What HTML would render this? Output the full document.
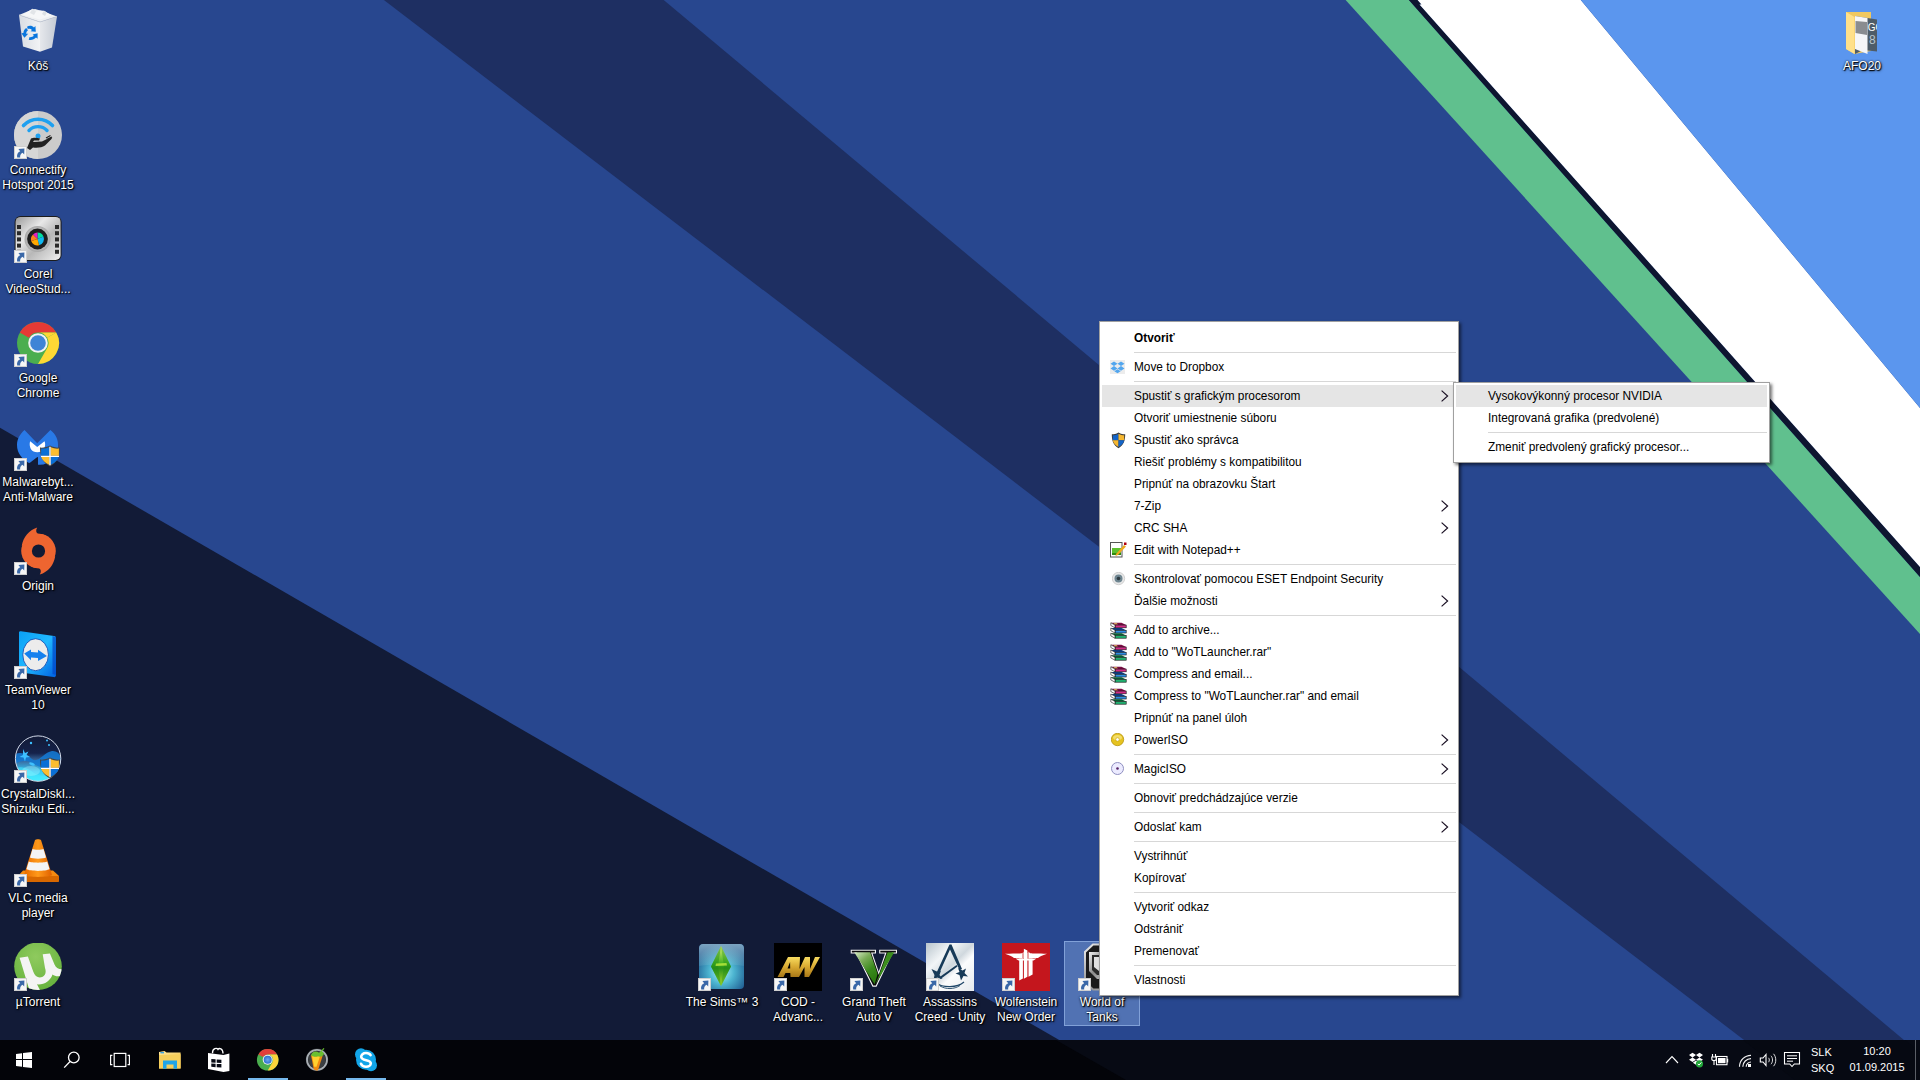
<!DOCTYPE html>
<html><head><meta charset="utf-8">
<style>
html,body{margin:0;padding:0;width:1920px;height:1080px;overflow:hidden;background:#28478f;}
body{position:relative;font-family:"Liberation Sans",sans-serif;}
#bg{position:absolute;left:0;top:0;}
.ic{position:absolute;width:76px;text-align:center;color:#fff;font-size:12px;line-height:15px;text-shadow:1px 1px 1px #000,0 0 2px rgba(0,0,0,.85),1px 1px 3px rgba(0,0,0,.6);}
.ic .lb{position:absolute;left:0;width:76px;top:54px;}
.ic svg{position:absolute;}
.ic{height:85px;}
.ic.sel{background:rgba(150,185,240,.38);box-shadow:inset 0 0 0 1px rgba(170,200,245,.55);}
.sc{position:absolute;width:12px;height:12px;background:#f4f4f4;border:1px solid #c8c8c8;box-sizing:border-box;}
#menu{position:absolute;left:1099px;top:321px;width:360px;height:675px;box-sizing:border-box;background:#fff;border:1px solid #a0a0a0;box-shadow:2px 2px 3px rgba(0,0,0,.55);}
.mi{position:absolute;left:0;width:358px;height:22px;font-size:11.85px;line-height:22px;color:#000;}
.mi span.t{position:absolute;left:34px;top:0;white-space:nowrap;}
.mi.hl{left:2px;width:351px;background:#e5e5e5;}
.mi.hl span.t{left:32px;}
.mi.hl .ar{left:339px;}
.sep{position:absolute;left:34px;width:322px;height:1px;background:#d7d7d7;}
.ar{position:absolute;left:341px;top:5px;}
.mic{position:absolute;left:10px;}
#sub{position:absolute;left:1453px;top:382px;width:317px;height:81px;box-sizing:border-box;background:#fff;border:1px solid #a0a0a0;box-shadow:2px 2px 3px rgba(0,0,0,.55);}
#tb{position:absolute;left:0;top:1040px;width:1920px;height:40px;}
.tray{position:absolute;color:#fff;font-size:11px;line-height:15px;white-space:nowrap;}
</style></head><body>
<svg id="bg" width="1920" height="1080" viewBox="0 0 1920 1080">
  <rect x="0" y="0" width="1920" height="1080" fill="#28478f"/>
  <polygon points="383.9,0 663.7,0 1951.7,1080 1796.4,1080" fill="#1e2f62"/>
  <polygon points="0,427.8 1128.4,1080 0,1080" fill="#121b37"/>
  <polygon points="1345.6,0 1408.9,0 1920,577 1920,634" fill="#60c08e"/>
  <polygon points="1408.9,0 1417.6,0 1421.5,4.5 1419.5,4.5 1920,567 1920,577" fill="#0e1630"/>
  <polygon points="1417.6,0 1580.8,0 1920,408 1920,567 1419.5,4.5 1421.5,4.5" fill="#ffffff"/>
  <polygon points="1580.8,0 1920,0 1920,408" fill="#5b96ee"/>
</svg>

<!--DESK-->
<div class="ic" style="left:0;top:5px"><svg width="48" height="48" viewBox="0 0 48 48" style="position:absolute;left:14px;top:2px">
<defs><linearGradient id="rbL" x1="0" y1="0" x2="1" y2="0"><stop offset="0" stop-color="#d9dde3"/><stop offset="1" stop-color="#f2f3f5"/></linearGradient>
<linearGradient id="rbR" x1="0" y1="0" x2="1" y2="0"><stop offset="0" stop-color="#e6e8ec"/><stop offset="1" stop-color="#c4cad4"/></linearGradient></defs>
<path d="M5 8 L17 3 L21 2 L28 4 L43 9.6 L26 15 Z" fill="#eef0f2"/>
<path d="M9 8 L14 4.5 L18.5 1.8 L22 4.5 L26 3.6 L30 3.8 L33 5.5 L38 8.5 L26 12.5Z" fill="#f6f7f8"/><path d="M18.5 1.8 L22 4.5 L20 8 L16 6Z" fill="#e2e5e8"/><path d="M30 3.8 L33 5.5 L31 9 L28 7Z" fill="#dde1e5"/>
<path d="M5 8 L26 15 L26 44.8 L9 39.4 Z" fill="url(#rbL)"/>
<path d="M26 15 L43 9.6 L38 40.4 L26 44.8 Z" fill="url(#rbR)"/>
<path d="M5 8 L26 15 L43 9.6" fill="none" stroke="#c7ccd4" stroke-width="0.8"/>
<g fill="#0a76de" transform="translate(16.2,25.9)">
<path d="M-3.2 -6.2 C-1 -7.6 2 -7.4 3.8 -5.4 L5.2 -6.8 L5.6 -1.2 L0.4 -1.6 L1.8 -3 C0.6 -4.4 -1.2 -4.6 -2.4 -3.8Z"/>
<path d="M-6.8 0.2 C-6.8 -2 -5.8 -3.8 -4 -5 L-2.2 -2.6 C-3.4 -1.8 -4 -0.6 -4 0.8 L-2 0.8 L-5.8 4.8 L-8.8 0.4Z"/>
<path d="M-1.5 6.8 C1 7.5 4 6.8 5.8 4.6 L7.4 5.8 L7.4 0.4 L2.4 1.6 L3.6 2.8 C2.4 4 0.8 4.4 -0.6 4.2Z"/>
</g>
</svg><div class="lb">Kôš</div></div>
<div class="ic" style="left:0;top:109px"><svg width="48" height="48" viewBox="0 0 48 48" style="position:absolute;left:14px;top:2px">
<circle cx="24" cy="24" r="24" fill="#cbcbcb"/><path d="M24 0 A24 24 0 0 0 24 48Z" fill="#d6d6d6"/>
<g fill="none" stroke="#1ea0f0" stroke-linecap="round"><path d="M9.5 14.5 A20 20 0 0 1 38.5 14.5" stroke-width="3.6"/><path d="M15 19.5 A12.5 12.5 0 0 1 33 19.5" stroke-width="3.4"/></g>
<circle cx="24" cy="25" r="2.5" fill="#1ea0f0"/>
<path d="M13 37 L17 27.5 C19 26.6 23 26.6 26 27.5 L25 29.6 L20 29.6 L19 31 L28 30.5 L36 26.5 C37.5 26 38.5 27 37.5 28 L31 34.5 C28 36.5 24 37 19 36.5 L16 39Z" fill="#222"/>
<path d="M32 27 L36.5 24.5 M33 28.5 L38 26" stroke="#222" stroke-width="1.2"/>
</svg><svg class="sco" width="13" height="13" viewBox="0 0 13 13" style="position:absolute;left:14px;top:37px"><rect x="0" y="0" width="13" height="13" fill="#cfcfcf"/><rect x="1" y="1" width="11" height="11" fill="#f6f6f6"/><path d="M3.2 11.6 C2.6 8.6 3.6 6.4 6.2 5.2 L4.4 3 L10.4 2.6 L10.2 8.6 L8.6 6.8 C6.8 7.8 5.8 9.4 6.2 11.6Z" fill="#3a68a8"/></svg><div class="lb">Connectify<br>Hotspot 2015</div></div>
<div class="ic" style="left:0;top:213px"><svg width="48" height="48" viewBox="0 0 48 48" style="position:absolute;left:14px;top:2px">
<defs><linearGradient id="crG" x1="0" y1="0" x2="1" y2="1"><stop offset="0" stop-color="#9a9a9a"/><stop offset=".35" stop-color="#e8e8e8"/><stop offset=".6" stop-color="#b8b8b8"/><stop offset="1" stop-color="#f0f0f0"/></linearGradient>
<radialGradient id="crL" cx=".5" cy=".5" r=".5"><stop offset="0" stop-color="#fff"/><stop offset="1" stop-color="#a8a8a8"/></radialGradient></defs>
<rect x="0.6" y="0.9" width="47" height="45" rx="6" fill="#1c1c1c"/>
<rect x="1.6" y="1.9" width="45" height="43" rx="5" fill="url(#crG)"/>
<g fill="#2a2a2a"><rect x="3" y="10" width="4" height="4"/><rect x="3" y="16.2" width="4" height="4"/><rect x="3" y="22.4" width="4" height="4"/><rect x="3" y="28.6" width="4" height="4"/><rect x="3" y="34.8" width="4" height="4"/>
<rect x="41" y="10" width="4" height="4"/><rect x="41" y="16.2" width="4" height="4"/><rect x="41" y="22.4" width="4" height="4"/><rect x="41" y="28.6" width="4" height="4"/><rect x="41" y="34.8" width="4" height="4"/></g>
<circle cx="23.5" cy="24" r="13" fill="url(#crL)"/><circle cx="23.5" cy="24" r="10.4" fill="#1e1e1e"/>
<path d="M23.5 24 L23.5 17.5 A6.5 6.5 0 0 1 29.5 21.5Z" fill="#00e0a0"/><path d="M23.5 24 L29.5 21.5 A6.5 6.5 0 0 1 25 30.3Z" fill="#10b8f0"/>
<path d="M23.5 24 L25 30.3 A6.5 6.5 0 0 1 17.2 26Z" fill="#ffa800"/><path d="M23.5 24 L17.2 26 A6.5 6.5 0 0 1 19 19.5Z" fill="#ff8020"/><path d="M23.5 24 L19 19.5 A6.5 6.5 0 0 1 23.5 17.5Z" fill="#e020c0"/>
</svg><svg class="sco" width="13" height="13" viewBox="0 0 13 13" style="position:absolute;left:14px;top:37px"><rect x="0" y="0" width="13" height="13" fill="#cfcfcf"/><rect x="1" y="1" width="11" height="11" fill="#f6f6f6"/><path d="M3.2 11.6 C2.6 8.6 3.6 6.4 6.2 5.2 L4.4 3 L10.4 2.6 L10.2 8.6 L8.6 6.8 C6.8 7.8 5.8 9.4 6.2 11.6Z" fill="#3a68a8"/></svg><div class="lb">Corel<br>VideoStud...</div></div>
<div class="ic" style="left:0;top:317px"><svg width="48" height="48" viewBox="0 0 48 48" style="position:absolute;left:14px;top:2px">
<circle cx="24" cy="24" r="21" fill="#4bae4f"/>
<path d="M24 3 A21 21 0 0 1 42.2 13.5 L24 13.5 A10.5 10.5 0 0 0 14.9 18.75 L5.8 13.5 A21 21 0 0 1 24 3Z" fill="#e53a35"/>
<path d="M42.2 13.5 A21 21 0 0 1 24 45 L33.1 29.25 A10.5 10.5 0 0 0 33.1 18.75 Z" fill="#fdd835"/>
<path d="M42.2 13.5 L24 13.5 A10.5 10.5 0 0 1 33.1 18.75Z" fill="#fdd835"/>
<circle cx="24" cy="24" r="9.8" fill="#f2f2f2"/><circle cx="24" cy="24" r="7.8" fill="#3f84d6"/>
</svg><svg class="sco" width="13" height="13" viewBox="0 0 13 13" style="position:absolute;left:14px;top:37px"><rect x="0" y="0" width="13" height="13" fill="#cfcfcf"/><rect x="1" y="1" width="11" height="11" fill="#f6f6f6"/><path d="M3.2 11.6 C2.6 8.6 3.6 6.4 6.2 5.2 L4.4 3 L10.4 2.6 L10.2 8.6 L8.6 6.8 C6.8 7.8 5.8 9.4 6.2 11.6Z" fill="#3a68a8"/></svg><div class="lb">Google<br>Chrome</div></div>
<div class="ic" style="left:0;top:421px"><svg width="48" height="48" viewBox="0 0 48 48" style="position:absolute;left:14px;top:2px">
<path d="M10.5 7 L23.2 20.3 L36.4 7 C42 11.5 44.6 17 44 24 C43 33 35.5 41.8 26 41.8 L24 41.8 L24 34 C22 34 17 40 15 40 C8 36 3 30 3 22 C3 16 6 11 10.5 7Z" fill="#2979e6"/>
<path d="M16.2 18.2 L23.2 24 L30.5 18.2 C32 21.5 31 26.5 27 28.5 C25 29.4 21.6 29.4 19.6 28.5 C16 27 15 21.5 16.2 18.2Z" fill="#fff"/>
</svg><svg width="22" height="22" viewBox="0 0 22 22" style="position:absolute;left:39px;top:24px"><path d="M11 0.6 C8 2.3 4.6 2.8 1 2.6 C1 11 3.5 17.8 11 21.4 C18.5 17.8 21 11 21 2.6 C17.4 2.8 14 2.3 11 0.6Z" fill="#444"/><path d="M11 1.8 C8.3 3.3 5.2 3.7 2.1 3.6 L2.1 10.8 L10.2 10.8 L10.2 2.3Z" fill="#0a6fd6"/><path d="M11.8 2.3 C14.3 3.5 17 3.8 19.9 3.6 L19.9 10.8 L11.8 10.8Z" fill="#fbbd30"/><path d="M2.2 12 L10.2 12 L10.2 19.8 C5.5 17.2 3 15 2.2 12Z" fill="#fbbd30"/><path d="M11.8 12 L19.8 12 C19 15 16.5 17.2 11.8 19.8Z" fill="#0a6fd6"/><path d="M11 1.8 L11 20.2 M2 11.4 L20 11.4" stroke="#fff" stroke-width="1.4"/></svg><svg class="sco" width="13" height="13" viewBox="0 0 13 13" style="position:absolute;left:14px;top:37px"><rect x="0" y="0" width="13" height="13" fill="#cfcfcf"/><rect x="1" y="1" width="11" height="11" fill="#f6f6f6"/><path d="M3.2 11.6 C2.6 8.6 3.6 6.4 6.2 5.2 L4.4 3 L10.4 2.6 L10.2 8.6 L8.6 6.8 C6.8 7.8 5.8 9.4 6.2 11.6Z" fill="#3a68a8"/></svg><div class="lb">Malwarebyt...<br>Anti-Malware</div></div>
<div class="ic" style="left:0;top:525px"><svg width="48" height="48" viewBox="0 0 48 48" style="position:absolute;left:14px;top:2px">
<circle cx="24.5" cy="24" r="17.3" fill="#ee6530"/>
<path d="M7.8 19 C9 10 15 3 23.2 0.4 C21.5 3.5 22 5.5 24 6.7 C28 6.8 31 8 33.5 9.5 Z" fill="#ee6530"/>
<path d="M41.2 29 C40 38 34 45 25.8 47.6 C27.5 44.5 27 42.5 25 41.3 C21 41.2 18 40 15.5 38.5 Z" fill="#ee6530"/>
<circle cx="24.5" cy="24" r="6.6" fill="#121a34"/>
</svg><svg class="sco" width="13" height="13" viewBox="0 0 13 13" style="position:absolute;left:14px;top:37px"><rect x="0" y="0" width="13" height="13" fill="#cfcfcf"/><rect x="1" y="1" width="11" height="11" fill="#f6f6f6"/><path d="M3.2 11.6 C2.6 8.6 3.6 6.4 6.2 5.2 L4.4 3 L10.4 2.6 L10.2 8.6 L8.6 6.8 C6.8 7.8 5.8 9.4 6.2 11.6Z" fill="#3a68a8"/></svg><div class="lb">Origin</div></div>
<div class="ic" style="left:0;top:629px"><svg width="48" height="48" viewBox="0 0 48 48" style="position:absolute;left:14px;top:2px">
<defs><linearGradient id="tvG" x1="0" y1="0" x2="1" y2="1"><stop offset="0" stop-color="#0aa0f5"/><stop offset=".5" stop-color="#20b8ff"/><stop offset="1" stop-color="#0060e0"/></linearGradient></defs>
<path d="M5 1.5 C5 0.5 6 0 7 0.2 L40 5 C41.5 5.2 42 6 42 7 L42 44 C42 45.5 41 46.5 39.5 46 L7 41.5 C5.5 41.3 5 40.5 5 39.5Z" fill="url(#tvG)"/>
<path d="M38.5 5 L42 6 L42 44 L38.5 43Z" fill="#0046c8" opacity=".7"/>
<ellipse cx="21.6" cy="23.7" rx="12.8" ry="16" fill="#ececec" stroke="#0040b0" stroke-width="0.8"/>
<path d="M10.2 22.5 L17 18.4 L17 21 L24 21.5 L24 18.8 L33 25 L24 30 L24 27 L17 26.5 L17 29.2Z" fill="#1580ee"/>
</svg><svg class="sco" width="13" height="13" viewBox="0 0 13 13" style="position:absolute;left:14px;top:37px"><rect x="0" y="0" width="13" height="13" fill="#cfcfcf"/><rect x="1" y="1" width="11" height="11" fill="#f6f6f6"/><path d="M3.2 11.6 C2.6 8.6 3.6 6.4 6.2 5.2 L4.4 3 L10.4 2.6 L10.2 8.6 L8.6 6.8 C6.8 7.8 5.8 9.4 6.2 11.6Z" fill="#3a68a8"/></svg><div class="lb">TeamViewer<br>10</div></div>
<div class="ic" style="left:0;top:733px"><svg width="48" height="48" viewBox="0 0 48 48" style="position:absolute;left:14px;top:2px">
<defs><linearGradient id="cdG" x1="0" y1="0" x2="0" y2="1"><stop offset="0" stop-color="#121a36"/><stop offset=".38" stop-color="#15224a"/><stop offset=".55" stop-color="#3a6aa0"/><stop offset=".78" stop-color="#38c8f4"/><stop offset="1" stop-color="#50f4ff"/></linearGradient>
<clipPath id="cdC"><circle cx="24.1" cy="23.6" r="22.7"/></clipPath></defs>
<circle cx="24.1" cy="23.6" r="22.7" fill="url(#cdG)"/>
<g clip-path="url(#cdC)">
<path d="M0 20 C6 16 12 18 18 24 C24 29 30 17 38 16 C43 15.5 46 19 48 24 L48 30 C44 25 40 26 36 30 C32 34 26 33 20 29 C14 25 6 25 0 30Z" fill="#1478d0" opacity=".9"/>
<path d="M0 34 C8 30 14 33 20 38 C26 42 34 42 48 36 L48 48 L0 48Z" fill="#40e8ff" opacity=".6"/><ellipse cx="17" cy="36" rx="9" ry="5" fill="#b8f8ff" opacity=".35"/>
<g fill="#3ec0ff"><path d="M9 14 L11 18 L14.5 16.5 L12.5 20 L16 22 L12 22.5 L11 26.5 L9.5 22.5 L5.5 22 L9 20Z"/><ellipse cx="18" cy="29" rx="3" ry="1.3" transform="rotate(25 18 29)"/><circle cx="17" cy="8" r="1.2"/><circle cx="33" cy="5.5" r="1"/><circle cx="35" cy="10" r="1"/></g>
</g>
<circle cx="24.1" cy="23.6" r="22.7" fill="none" stroke="#d0d8e8" stroke-width="1"/>
</svg><svg width="22" height="22" viewBox="0 0 22 22" style="position:absolute;left:39px;top:24px"><path d="M11 0.6 C8 2.3 4.6 2.8 1 2.6 C1 11 3.5 17.8 11 21.4 C18.5 17.8 21 11 21 2.6 C17.4 2.8 14 2.3 11 0.6Z" fill="#444"/><path d="M11 1.8 C8.3 3.3 5.2 3.7 2.1 3.6 L2.1 10.8 L10.2 10.8 L10.2 2.3Z" fill="#0a6fd6"/><path d="M11.8 2.3 C14.3 3.5 17 3.8 19.9 3.6 L19.9 10.8 L11.8 10.8Z" fill="#fbbd30"/><path d="M2.2 12 L10.2 12 L10.2 19.8 C5.5 17.2 3 15 2.2 12Z" fill="#fbbd30"/><path d="M11.8 12 L19.8 12 C19 15 16.5 17.2 11.8 19.8Z" fill="#0a6fd6"/><path d="M11 1.8 L11 20.2 M2 11.4 L20 11.4" stroke="#fff" stroke-width="1.4"/></svg><svg class="sco" width="13" height="13" viewBox="0 0 13 13" style="position:absolute;left:14px;top:37px"><rect x="0" y="0" width="13" height="13" fill="#cfcfcf"/><rect x="1" y="1" width="11" height="11" fill="#f6f6f6"/><path d="M3.2 11.6 C2.6 8.6 3.6 6.4 6.2 5.2 L4.4 3 L10.4 2.6 L10.2 8.6 L8.6 6.8 C6.8 7.8 5.8 9.4 6.2 11.6Z" fill="#3a68a8"/></svg><div class="lb">CrystalDiskI...<br>Shizuku Edi...</div></div>
<div class="ic" style="left:0;top:837px"><svg width="48" height="48" viewBox="0 0 48 48" style="position:absolute;left:14px;top:2px">
<defs><linearGradient id="vlG" x1="0" y1="0" x2="1" y2="0"><stop offset="0" stop-color="#e86a00"/><stop offset=".5" stop-color="#ff9a1a"/><stop offset="1" stop-color="#e06000"/></linearGradient></defs>
<path d="M4 37 L9 31.5 L39 31.5 L45 37 L45 41.5 C45 42.5 44 43 43 43 L6 43 C5 43 4 42.5 4 41.5Z" fill="#f58a10"/>
<path d="M4 37 L45 37 L45 41.5 C45 42.5 44 43 43 43 L6 43 C5 43 4 42.5 4 41.5Z" fill="#d86800"/>
<path d="M21 1 C22 0 26 0 27 1 L38 36 C36 38.5 12 38.5 10 36Z" fill="url(#vlG)"/>
<path d="M18.5 10 C20 11 28 11 29.5 10 L32 18.5 C29.5 20 18.5 20 16 18.5Z" fill="#f4f4f4"/>
<path d="M14.8 22.5 C17 24 31 24 33.2 22.5 L35.5 30 C32 32.5 16 32.5 12.5 30Z" fill="#f4f4f4"/>
</svg><svg class="sco" width="13" height="13" viewBox="0 0 13 13" style="position:absolute;left:14px;top:37px"><rect x="0" y="0" width="13" height="13" fill="#cfcfcf"/><rect x="1" y="1" width="11" height="11" fill="#f6f6f6"/><path d="M3.2 11.6 C2.6 8.6 3.6 6.4 6.2 5.2 L4.4 3 L10.4 2.6 L10.2 8.6 L8.6 6.8 C6.8 7.8 5.8 9.4 6.2 11.6Z" fill="#3a68a8"/></svg><div class="lb">VLC media<br>player</div></div>
<div class="ic" style="left:0;top:941px"><svg width="48" height="48" viewBox="0 0 48 48" style="position:absolute;left:14px;top:2px">
<defs><radialGradient id="utG" cx=".45" cy=".3" r=".8"><stop offset="0" stop-color="#8fca5e"/><stop offset="1" stop-color="#62b03a"/></radialGradient>
<clipPath id="utC"><circle cx="24" cy="23.3" r="23.8"/></clipPath></defs>
<circle cx="24" cy="23.3" r="23.8" fill="url(#utG)"/>
<g clip-path="url(#utC)"><path d="M5.6 14.8 L13.9 13.6 L19.2 28.5 C20.8 33.5 24.5 35.5 28.2 34 C31.6 32.6 32.4 29 31 25 L28.7 11.2 L35.9 10.4 L40.5 21.5 C41.8 24.8 44.5 26.4 48.5 26.2 L48.5 32.5 C44.5 33.8 41 33.5 38.5 31.5 C36.5 37.5 31 41.5 24.5 41.5 L23 41.3 L27 49 L16 49Z" fill="#f4f4f4"/></g>
</svg><svg class="sco" width="13" height="13" viewBox="0 0 13 13" style="position:absolute;left:14px;top:37px"><rect x="0" y="0" width="13" height="13" fill="#cfcfcf"/><rect x="1" y="1" width="11" height="11" fill="#f6f6f6"/><path d="M3.2 11.6 C2.6 8.6 3.6 6.4 6.2 5.2 L4.4 3 L10.4 2.6 L10.2 8.6 L8.6 6.8 C6.8 7.8 5.8 9.4 6.2 11.6Z" fill="#3a68a8"/></svg><div class="lb">µTorrent</div></div>
<div class="ic" style="left:684px;top:941px"><svg width="48" height="48" viewBox="0 0 48 48" style="position:absolute;left:14px;top:2px">
<defs><radialGradient id="smG" cx=".5" cy=".62" r=".62"><stop offset="0" stop-color="#a8f4fa"/><stop offset=".45" stop-color="#4cb4d0"/><stop offset="1" stop-color="#1e5a90"/></radialGradient>
<linearGradient id="smT" x1="0" y1="0" x2="0" y2="1"><stop offset="0" stop-color="#c8e0e8" stop-opacity=".55"/><stop offset="1" stop-color="#c8e0e8" stop-opacity=".1"/></linearGradient>
<linearGradient id="smP" x1="0" y1="0" x2="0" y2="1"><stop offset="0" stop-color="#d8f070"/><stop offset=".45" stop-color="#40b020"/><stop offset=".55" stop-color="#2a9018"/><stop offset="1" stop-color="#b0e030"/></linearGradient></defs>
<rect x="1" y="1" width="45" height="45" rx="4" fill="url(#smG)"/>
<path d="M1 23 C14 20.5 33 20.5 46 23 L46 5 C46 2.8 44.2 1 42 1 L5 1 C2.8 1 1 2.8 1 5Z" fill="url(#smT)"/>
<path d="M23 3 L33 23.5 L23 43 L13 23.5Z" fill="url(#smP)"/>
<path d="M23 3 L13 23.5 L23 43 L20 23.5Z" fill="#1e8a18" opacity=".45"/>
<path d="M23 3 L33 23.5 L23 43 L26 23.5Z" fill="#1e8a18" opacity=".35"/>
<path d="M18 20.5 L28.5 20 L29 22.5 L17.5 23Z" fill="#c8f040" opacity=".75"/>
</svg><svg class="sco" width="13" height="13" viewBox="0 0 13 13" style="position:absolute;left:14px;top:37px"><rect x="0" y="0" width="13" height="13" fill="#cfcfcf"/><rect x="1" y="1" width="11" height="11" fill="#f6f6f6"/><path d="M3.2 11.6 C2.6 8.6 3.6 6.4 6.2 5.2 L4.4 3 L10.4 2.6 L10.2 8.6 L8.6 6.8 C6.8 7.8 5.8 9.4 6.2 11.6Z" fill="#3a68a8"/></svg><div class="lb">The Sims™ 3</div></div>
<div class="ic" style="left:760px;top:941px"><svg width="48" height="48" viewBox="0 0 48 48" style="position:absolute;left:14px;top:2px">
<defs><linearGradient id="cdAW" x1="0" y1="0" x2="0" y2="1"><stop offset="0" stop-color="#f8dc60"/><stop offset=".5" stop-color="#d8a830"/><stop offset="1" stop-color="#a87818"/></linearGradient></defs>
<rect x="0" y="0" width="48" height="48" fill="#000"/>
<path d="M3.5 34 L14 14 L22 14 L22.5 34 L16.5 34 L16.3 30 L11.5 30 L9.5 34Z M13.5 25.5 L16.2 25.5 L16.1 19Z" fill="url(#cdAW)"/>
<path d="M20 14 L26 14 L25.5 26 L31 14 L36 14 L36 26 L41 14 L46 14 L35 34 L30.5 34 L30.5 24 L25 34 L20.5 34Z" fill="url(#cdAW)"/>
</svg><svg class="sco" width="13" height="13" viewBox="0 0 13 13" style="position:absolute;left:14px;top:37px"><rect x="0" y="0" width="13" height="13" fill="#cfcfcf"/><rect x="1" y="1" width="11" height="11" fill="#f6f6f6"/><path d="M3.2 11.6 C2.6 8.6 3.6 6.4 6.2 5.2 L4.4 3 L10.4 2.6 L10.2 8.6 L8.6 6.8 C6.8 7.8 5.8 9.4 6.2 11.6Z" fill="#3a68a8"/></svg><div class="lb">COD -<br>Advanc...</div></div>
<div class="ic" style="left:836px;top:941px"><svg width="48" height="48" viewBox="0 0 48 48" style="position:absolute;left:14px;top:2px">
<defs><linearGradient id="gtG" x1="0" y1="0" x2=".6" y2="1"><stop offset="0" stop-color="#d8ecc8"/><stop offset=".35" stop-color="#7aac58"/><stop offset=".7" stop-color="#3a8a1c"/><stop offset="1" stop-color="#2c7a10"/></linearGradient></defs>
<path d="M0.7 6.7 L26 6.7 L26 10.5 L22.5 10.5 L28.7 28.7 L35 10.5 L29.2 10.5 L29.2 6.7 L47 6.7 L47 10.5 L42.5 10.5 L26.5 43.7 L22.5 43.7 L6 10.5 L0.7 10.5Z" fill="#f4f4f4"/>
<path d="M1.8 7.8 L24.9 7.8 L24.9 9.4 L21 9.4 L28.7 31.8 L36.6 9.4 L30.3 9.4 L30.3 7.8 L45.9 7.8 L45.9 9.4 L41.8 9.4 L25.8 42.6 L23.2 42.6 L6.7 9.4 L1.8 9.4Z" fill="#0a0a0a"/>
<path d="M4.2 9.2 L20.2 9.2 L27.6 31 L24.6 41.2 Z" fill="url(#gtG)"/>
<path d="M37.6 9.2 L44.2 9.2 L25.6 41 L28.9 32.6 Z" fill="#3c8e1e"/>
</svg><svg class="sco" width="13" height="13" viewBox="0 0 13 13" style="position:absolute;left:14px;top:37px"><rect x="0" y="0" width="13" height="13" fill="#cfcfcf"/><rect x="1" y="1" width="11" height="11" fill="#f6f6f6"/><path d="M3.2 11.6 C2.6 8.6 3.6 6.4 6.2 5.2 L4.4 3 L10.4 2.6 L10.2 8.6 L8.6 6.8 C6.8 7.8 5.8 9.4 6.2 11.6Z" fill="#3a68a8"/></svg><div class="lb">Grand Theft<br>Auto V</div></div>
<div class="ic" style="left:912px;top:941px"><svg width="48" height="48" viewBox="0 0 48 48" style="position:absolute;left:14px;top:2px">
<defs><linearGradient id="acG" x1="0" y1="0" x2="1" y2="1"><stop offset="0" stop-color="#b8c4cc"/><stop offset=".3" stop-color="#f2f5f7"/><stop offset=".5" stop-color="#d0d8de"/><stop offset=".62" stop-color="#fbfcfd"/><stop offset="1" stop-color="#e6eaee"/></linearGradient></defs>
<rect x="0" y="0" width="48" height="48" fill="url(#acG)"/>
<path d="M23.5 1.5 L25.5 1.5 L36 26 L33.5 27 L24 6.5 L12 33 L9.5 32Z" fill="#173a58"/>
<path d="M5.5 26 L12 29 L15 27.5 L13.5 32 L16.5 36 L11 34.5 L7.5 37.5 L8.5 32Z" fill="#173a58"/>
<path d="M32 25 L36.5 27.5 L40 25.5 L38.5 30 L42 33.5 L37.5 33 L35 37.5 L33.5 32 L29.5 30.5 L33.5 29Z" fill="#173a58"/>
<path d="M13 34.5 L30.5 22 L31.5 23.5 L14.5 36Z" fill="#173a58"/>
<path d="M10 40 C17 45 31 45 38 39" fill="none" stroke="#1e4668" stroke-width="1.2"/>
<path d="M14 43 C20 46.5 28 46.5 34 42.5" fill="none" stroke="#1e4668" stroke-width=".9"/>
</svg><svg class="sco" width="13" height="13" viewBox="0 0 13 13" style="position:absolute;left:14px;top:37px"><rect x="0" y="0" width="13" height="13" fill="#cfcfcf"/><rect x="1" y="1" width="11" height="11" fill="#f6f6f6"/><path d="M3.2 11.6 C2.6 8.6 3.6 6.4 6.2 5.2 L4.4 3 L10.4 2.6 L10.2 8.6 L8.6 6.8 C6.8 7.8 5.8 9.4 6.2 11.6Z" fill="#3a68a8"/></svg><div class="lb">Assassins<br>Creed - Unity</div></div>
<div class="ic" style="left:988px;top:941px"><svg width="48" height="48" viewBox="0 0 48 48" style="position:absolute;left:14px;top:2px">
<rect x="0" y="0" width="48" height="48" fill="#c4161d"/>
<g fill="#fff">
<path d="M3 10.8 C14 10.4 18 10.6 20.5 10.3 L21.5 8.5 L21.5 10.3 L26.5 10.3 L26.5 8.5 L28 10.3 C31 10.6 36 10.4 45 10.8 C40 12.3 37.5 14 36 15 L12 15 C10.5 14 8 12.3 3 10.8Z"/>
<path d="M13.5 15.6 L34.5 15.6 L31.5 17.5 L16.5 17.5Z"/>
<path d="M17.2 15.6 L20.9 15.6 L20.9 35.4 L17.2 37.4Z"/>
<path d="M21.9 5.8 L25.4 7.6 L25.4 33.8 L21.9 35.8Z"/>
<path d="M26.5 15.6 L30.6 15.6 L30.6 31.6 L26.5 33.8Z"/>
</g>
<path d="M21 10.3 L21 15 M26 10.3 L26 15" stroke="#c4161d" stroke-width="0.8"/>
</svg><svg class="sco" width="13" height="13" viewBox="0 0 13 13" style="position:absolute;left:14px;top:37px"><rect x="0" y="0" width="13" height="13" fill="#cfcfcf"/><rect x="1" y="1" width="11" height="11" fill="#f6f6f6"/><path d="M3.2 11.6 C2.6 8.6 3.6 6.4 6.2 5.2 L4.4 3 L10.4 2.6 L10.2 8.6 L8.6 6.8 C6.8 7.8 5.8 9.4 6.2 11.6Z" fill="#3a68a8"/></svg><div class="lb">Wolfenstein<br>New Order</div></div>
<div class="ic sel" style="left:1064px;top:941px"><svg width="48" height="48" viewBox="0 0 48 48" style="position:absolute;left:14px;top:2px">
<defs><linearGradient id="wtG" x1="0" y1="0" x2="1" y2="1"><stop offset="0" stop-color="#f0f0f0"/><stop offset=".5" stop-color="#8a8a8a"/><stop offset="1" stop-color="#d0d0d0"/></linearGradient></defs>
<path d="M15 1.5 L38 1.5 L46 9 L46 39 L38 46.5 L15 46.5 L7 39 L7 9Z" fill="#1a1a1a" stroke="url(#wtG)" stroke-width="2"/>
<path d="M11 9 L30 9 L30 36 L19 36 L11 28Z" fill="url(#wtG)"/>
<path d="M14 12 L26 12 L26 32 L19 32 L14 27Z" fill="#2a2a2a"/>
<path d="M16 14 L21 14 L21 28 L16 24Z" fill="#e0e0e0"/>
</svg><svg class="sco" width="13" height="13" viewBox="0 0 13 13" style="position:absolute;left:14px;top:37px"><rect x="0" y="0" width="13" height="13" fill="#cfcfcf"/><rect x="1" y="1" width="11" height="11" fill="#f6f6f6"/><path d="M3.2 11.6 C2.6 8.6 3.6 6.4 6.2 5.2 L4.4 3 L10.4 2.6 L10.2 8.6 L8.6 6.8 C6.8 7.8 5.8 9.4 6.2 11.6Z" fill="#3a68a8"/></svg><div class="lb">World of<br>Tanks</div></div>
<div class="ic" style="left:1824px;top:5px"><svg width="48" height="48" viewBox="0 0 48 48" style="position:absolute;left:14px;top:2px">
<path d="M8 5 L33 5 L33 44 L16.5 47 L8 42Z" fill="#f0c860"/>
<path d="M17 9 L39 12.5 L39 44.5 L25 43 L17 47Z" fill="#4e5c68"/>
<path d="M17 9 L29.5 11 L29.5 47 L17 42Z" fill="#f6f6f8"/>
<path d="M17.5 14 L29 15 L29 28 L17.5 26Z" fill="#8a8c90"/>
<path d="M8 5 L16.5 10 L16.5 47 L8 42Z" fill="#ffe08a"/>
<clipPath id="afoC"><path d="M29.5 11 L39 12.5 L39 44.5 L29.5 47Z"/></clipPath>
<g clip-path="url(#afoC)" style="text-shadow:none"><text x="29.8" y="23.5" font-family="Liberation Sans" font-size="10" fill="#fff" style="text-shadow:none">GC</text>
<text x="31" y="37" font-family="Liberation Sans" font-size="12" fill="#b8c4cc" style="text-shadow:none">8</text></g>
</svg><div class="lb">AFO20</div></div>
<!--/DESK-->
<!-- taskbar -->
<div id="tb">
<svg width="1920" height="40" viewBox="0 0 1920 40" style="position:absolute;left:0;top:0">
  <defs>
   <radialGradient id="chG" cx=".5" cy=".5" r=".5"><stop offset="0" stop-color="#6fa8f0"/><stop offset="1" stop-color="#2a6fcf"/></radialGradient>
   <linearGradient id="flG" x1="0" y1="0" x2="1" y2="1"><stop offset="0" stop-color="#ffe79a"/><stop offset="1" stop-color="#f2c24a"/></linearGradient>
  </defs>
  <rect width="1920" height="40" fill="#070a14"/>
  <polygon points="0,0 1056,0 1126,40 0,40" fill="#030409"/>
  <polygon points="1743,0 1905,0 1920,12 1920,40 1795,40" fill="#060912"/>
  <!-- start -->
  <g fill="#fff"><path d="M16 14 L22 13.2 L22 19 L16 19Z M23 13 L32 11.9 L32 19 L23 19Z M16 20 L22 20 L22 26.8 L16 26Z M23 20 L32 20 L32 28.1 L23 27Z"/></g>
  <!-- search -->
  <g fill="none" stroke="#fff" stroke-width="1.3"><circle cx="73.8" cy="17.5" r="5.3"/><path d="M70 21.5 L64.2 27.6"/></g>
  <!-- task view -->
  <g fill="none" stroke="#fff" stroke-width="1.2"><rect x="114.2" y="13.4" width="11.6" height="13.1"/><path d="M112.4 15.4 L110.6 15.4 L110.6 24.6 L112.4 24.6 M127.6 15.4 L129.4 15.4 L129.4 24.6 L127.6 24.6"/></g>
  <!-- explorer -->
  <path d="M159 12 L164.5 11 L166.5 12.6 L180.6 12.6 L180.6 28.5 L159 28.5Z" fill="url(#flG)"/>
  <path d="M159 15 L180.6 14.2 L180.6 28.5 L159 28.5Z" fill="#f6cf5c"/>
  <rect x="160.4" y="12" width="3.6" height="1.4" fill="#3aa0e0"/>
  <path d="M163 28.7 L163 20.6 L177 20.6 L177 28.7 L173.5 28.7 L173.5 24.5 L166.5 24.5 L166.5 28.7Z" fill="#1fa5e8"/>
  <!-- store -->
  <path d="M208 13 L223.5 15 L229.4 13.5 L229.4 31 L223.5 32 L208 29Z" fill="#fff"/>
  <path d="M212.5 13.2 C212.3 8 217 7.6 218 9.5 C219 7.8 223 8 223 13.5" fill="none" stroke="#fff" stroke-width="1.3"/>
  <g fill="#070a14"><path d="M211.3 19 L215.6 19.3 L215.6 22.7 L211.3 22.5Z M216.7 19.4 L221.4 19.7 L221.4 23 L216.7 22.8Z M211.3 23.6 L215.6 23.8 L215.6 27.2 L211.3 26.8Z M216.7 23.9 L221.4 24.1 L221.4 27.6 L216.7 27.3Z"/></g>
  <!-- chrome -->
  <g transform="translate(267.7,19.8)">
   <circle r="10.8" fill="#4aae4e"/>
   <path d="M0 -10.8 A10.8 10.8 0 0 1 9.35 -5.4 L0 -5.4 A5.4 5.4 0 0 0 -4.68 -2.7 L-9.35 -5.4 A10.8 10.8 0 0 1 0 -10.8Z" fill="#e2403a"/>
   <path d="M9.35 -5.4 A10.8 10.8 0 0 1 0 10.8 L4.68 2.7 A5.4 5.4 0 0 0 4.68 -2.7Z M9.35 -5.4 L0 -5.4 A5.4 5.4 0 0 1 4.68 -2.7Z" fill="#fbd33a"/>
   <circle r="5" fill="#f0f0f0"/><circle r="4" fill="url(#chG)"/>
  </g>
  <!-- FL studio -->
  <g transform="translate(317,19.8)">
   <circle r="11.2" fill="#2a2d30"/><circle r="10" fill="none" stroke="#a8aeb4" stroke-width="1.8"/><circle r="8.6" fill="#3a3e42"/>
   <path d="M-6 -4.5 C-3 -6.5 3 -6 5.5 -3.5 L1 10.5 C-1 11 -3 10.5 -3.5 8.5 Z" fill="#f08a10"/>
   <path d="M-5 -3.5 L3 -3.5 L-0.5 7 L-2.8 7Z" fill="#ffd030"/>
   <path d="M-6 -4.5 C-5 -8.5 -1 -9.5 2 -7 C4 -9 6.5 -8 7 -6 C6 -3.5 4 -2.5 1 -3.5 C-1.5 -2.5 -4 -3 -6 -4.5Z" fill="#6abf30"/>
   <path d="M3 -7 L7 -11.5" stroke="#6abf30" stroke-width="1.2"/>
  </g>
  <!-- skype -->
  <g transform="translate(366,19.8)">
   <circle cx="-5" cy="-5.5" r="6" fill="#12a5e8"/><circle cx="5" cy="5.5" r="6" fill="#12a5e8"/><circle r="10" fill="#12a5e8"/>
   <path d="M4.6 -4.6 C3.8 -6 2.2 -6.8 0 -6.8 C-3 -6.8 -4.8 -5 -4.8 -3 C-4.8 1.5 4.8 -0.5 4.8 3.5 C4.8 5.5 2.8 7 0 7 C-2.6 7 -4.2 5.8 -5 4" fill="none" stroke="#fff" stroke-width="2.6" stroke-linecap="round"/>
  </g>
  <!-- active underlines -->
  <rect x="248" y="38" width="40" height="2" fill="#76b9ed"/>
  <rect x="346" y="38" width="40" height="2" fill="#76b9ed"/>
  <!-- tray chevron -->
  <path d="M1666 23 L1672 16.6 L1678 23" fill="none" stroke="#fff" stroke-width="1.1"/>
  <!-- dropbox tray -->
  <g fill="#fff" transform="translate(1689,12.8)">
   <path d="M3.5 0 L7 2.3 L3.5 4.6 L0 2.3Z M10.5 0 L14 2.3 L10.5 4.6 L7 2.3Z M3.5 4.6 L7 6.9 L3.5 9.2 L0 6.9Z M10.5 4.6 L14 6.9 L10.5 9.2 L7 6.9Z M3.8 9.9 L7 7.8 L10.2 9.9 L7 12Z"/>
   <circle cx="10.5" cy="11" r="3.6" fill="#22a83a"/>
   <path d="M8.8 11 L10 12.3 L12.4 9.6" fill="none" stroke="#fff" stroke-width="1"/>
  </g>
  <!-- power -->
  <g fill="none" stroke="#fff" stroke-width="1.1">
   <rect x="1716.5" y="16.5" width="10.5" height="8.2"/><path d="M1712.5 14 L1712.5 17 M1715.5 14 L1715.5 17 M1711.8 17 L1716.2 17 L1716.2 19 C1716.2 20 1715 20.6 1714 20.6 C1713 20.6 1711.8 20 1711.8 19Z M1714 20.6 L1714 25"/>
  </g>
  <rect x="1718" y="18" width="7.5" height="5.2" fill="#fff"/><rect x="1727" y="18.8" width="1.2" height="3.6" fill="#fff"/>
  <!-- wifi -->
  <g fill="none" stroke="#fff" stroke-width="1.2" opacity=".95">
   <path d="M1739.5 26.8 A11.5 11.5 0 0 1 1751 15.3"/><path d="M1742.8 26.8 A8.2 8.2 0 0 1 1751 18.6"/><path d="M1746.2 26.8 A4.8 4.8 0 0 1 1751 22"/>
  </g>
  <rect x="1748" y="24" width="3" height="3" fill="#fff"/>
  <!-- volume -->
  <path d="M1760.3 18 L1763 18 L1766 14.5 L1766 25.5 L1763 22 L1760.3 22Z" fill="none" stroke="#fff" stroke-width="1.1"/>
  <path d="M1768.5 17.8 C1769.6 19 1769.6 21 1768.5 22.2 M1771 15.8 C1773 18 1773 22 1771 24.2 M1773.5 13.8 C1776.5 17 1776.5 23 1773.5 26.2" fill="none" stroke="#fff" stroke-width="1" opacity=".85"/>
  <!-- action center -->
  <path d="M1784.5 12.5 L1799.5 12.5 L1799.5 24 L1794.3 24 L1792 26.5 L1789.7 24 L1784.5 24Z" fill="none" stroke="#fff" stroke-width="1.1"/>
  <path d="M1787 15.8 L1797 15.8 M1787 18.5 L1797 18.5 M1787 21.2 L1793 21.2" stroke="#fff" stroke-width="1"/>
  <!-- show desktop separator -->
  <rect x="1915" y="0" width="1" height="40" fill="#5a5e66"/>
</svg>
<div class="tray" style="left:1811px;top:5px">SLK</div>
<div class="tray" style="left:1811px;top:21px">SKQ</div>
<div class="tray" style="left:1846px;top:4px;width:62px;text-align:center">10:20</div>
<div class="tray" style="left:1846px;top:20px;width:62px;text-align:center">01.09.2015</div>
</div>

<!-- menu -->
<div id="menu">
<div class="mi" style="top:5px"><span class="t" style="font-weight:bold">Otvoriť</span></div>
<div class="sep" style="top:30px"></div>
<div class="mi" style="top:34px"><svg class="mic" style="top:3px" width="16" height="16" viewBox="0 0 16 16"><rect x="0" y="1" width="15" height="14" fill="#ececec"/><path d="M4 2.5 L7.5 4.8 L4 7.1 L0.5 4.8Z M11 2.5 L14.5 4.8 L11 7.1 L7.5 4.8Z M4 7.1 L7.5 9.4 L11 7.1 L14.5 9.4 L11 11.7 L7.5 9.4 L4 11.7 L0.5 9.4Z M4.3 12.3 L7.5 10.3 L10.7 12.3 L7.5 14.2Z" fill="#52a6ee"/></svg><span class="t">Move to Dropbox</span></div>
<div class="sep" style="top:59px"></div>
<div class="mi hl" style="top:63px"><span class="t">Spustiť s grafickým procesorom</span><svg class="ar" width="8" height="12" viewBox="0 0 8 12"><path d="M0.6 0.6 L6.6 6 L0.6 11.4" fill="none" stroke="#1a1024" stroke-width="1.2"/></svg></div>
<div class="mi" style="top:85px"><span class="t">Otvoriť umiestnenie súboru</span></div>
<div class="mi" style="top:107px"><svg class="mic" style="top:3px;left:11px" width="15" height="17" viewBox="0 0 15 17"><path d="M7.5 0.5 C5 2 3 2.3 0.8 2.3 C0.8 9 2.5 13.5 7.5 16.3 C12.5 13.5 14.2 9 14.2 2.3 C12 2.3 10 2 7.5 0.5Z" fill="#3a3a3a"/><path d="M7.5 1.7 C5.3 3 3.5 3.3 1.8 3.3 L1.8 8.2 L7.5 8.2Z" fill="#1565c8"/><path d="M7.5 1.7 C9.7 3 11.5 3.3 13.2 3.3 L13.2 8.2 L7.5 8.2Z" fill="#f5b731"/><path d="M1.8 8.2 L7.5 8.2 L7.5 15 C3.8 12.8 2.2 10.5 1.8 8.2Z" fill="#f5b731"/><path d="M13.2 8.2 L7.5 8.2 L7.5 15 C11.2 12.8 12.8 10.5 13.2 8.2Z" fill="#1565c8"/></svg><span class="t">Spustiť ako správca</span></div>
<div class="mi" style="top:129px"><span class="t">Riešiť problémy s kompatibilitou</span></div>
<div class="mi" style="top:151px"><span class="t">Pripnúť na obrazovku Štart</span></div>
<div class="mi" style="top:173px"><span class="t">7-Zip</span><svg class="ar" width="8" height="12" viewBox="0 0 8 12"><path d="M0.6 0.6 L6.6 6 L0.6 11.4" fill="none" stroke="#1a1024" stroke-width="1.2"/></svg></div>
<div class="mi" style="top:195px"><span class="t">CRC SHA</span><svg class="ar" width="8" height="12" viewBox="0 0 8 12"><path d="M0.6 0.6 L6.6 6 L0.6 11.4" fill="none" stroke="#1a1024" stroke-width="1.2"/></svg></div>
<div class="mi" style="top:217px"><svg class="mic" style="top:3px" width="17" height="16" viewBox="0 0 17 16"><rect x="0.5" y="0.5" width="11.5" height="14.5" fill="#fff" stroke="#555" stroke-width="1"/><rect x="2" y="6" width="9" height="7" fill="#5dc02f"/><rect x="2" y="11" width="9" height="2" fill="#2e8a10"/><path d="M6 12 L14 3 L16 4.5 L8 13 L5.5 14Z" fill="#f0a81c"/><rect x="14" y="0.5" width="2.5" height="2.5" fill="#b00010"/></svg><span class="t">Edit with Notepad++</span></div>
<div class="sep" style="top:242px"></div>
<div class="mi" style="top:246px"><svg class="mic" style="top:4px;left:12px" width="14" height="14" viewBox="0 0 14 14"><circle cx="6.5" cy="6.5" r="6.2" fill="#e8e8e8" stroke="#c8c8c8" stroke-width="0.8"/><circle cx="6.5" cy="6.5" r="4" fill="#6e8590"/><circle cx="6.5" cy="6.5" r="1.8" fill="#2d3a40"/></svg><span class="t">Skontrolovať pomocou ESET Endpoint Security</span></div>
<div class="mi" style="top:268px"><span class="t">Ďalšie možnosti</span><svg class="ar" width="8" height="12" viewBox="0 0 8 12"><path d="M0.6 0.6 L6.6 6 L0.6 11.4" fill="none" stroke="#1a1024" stroke-width="1.2"/></svg></div>
<div class="sep" style="top:293px"></div>
<div class="mi" style="top:297px"><svg class="mic" style="top:3px;left:10px" width="17" height="17" viewBox="0 0 17 17"><path d="M0.8 0.8 L11.5 0.8 L16.2 3.1 L5 3.1Z" fill="#7a0c44"/><rect x="5" y="3.1" width="11.2" height="2.7" fill="#d42a88" stroke="#111" stroke-width="0.6"/><path d="M0.8 0.8 L5 3.1 L5 5.8 L0.8 3.5Z" fill="#fff" stroke="#111" stroke-width="0.6"/><path d="M0.8 6.0 L11.5 6.0 L16.2 8.3 L5 8.3Z" fill="#0e3a7a"/><rect x="5" y="8.3" width="11.2" height="2.7" fill="#2f8ee0" stroke="#111" stroke-width="0.6"/><path d="M0.8 6.0 L5 8.3 L5 11.0 L0.8 8.7Z" fill="#fff" stroke="#111" stroke-width="0.6"/><path d="M0.8 11.200000000000001 L11.5 11.200000000000001 L16.2 13.5 L5 13.5Z" fill="#0a5a32"/><rect x="5" y="13.5" width="11.2" height="2.7" fill="#22b070" stroke="#111" stroke-width="0.6"/><path d="M0.8 11.200000000000001 L5 13.5 L5 16.2 L0.8 13.9Z" fill="#fff" stroke="#111" stroke-width="0.6"/><path d="M3.5 1.2 L6.5 1.2 L8 2.3 L5 2.3Z" fill="#f0e060"/></svg><span class="t">Add to archive...</span></div>
<div class="mi" style="top:319px"><svg class="mic" style="top:3px;left:10px" width="17" height="17" viewBox="0 0 17 17"><path d="M0.8 0.8 L11.5 0.8 L16.2 3.1 L5 3.1Z" fill="#7a0c44"/><rect x="5" y="3.1" width="11.2" height="2.7" fill="#d42a88" stroke="#111" stroke-width="0.6"/><path d="M0.8 0.8 L5 3.1 L5 5.8 L0.8 3.5Z" fill="#fff" stroke="#111" stroke-width="0.6"/><path d="M0.8 6.0 L11.5 6.0 L16.2 8.3 L5 8.3Z" fill="#0e3a7a"/><rect x="5" y="8.3" width="11.2" height="2.7" fill="#2f8ee0" stroke="#111" stroke-width="0.6"/><path d="M0.8 6.0 L5 8.3 L5 11.0 L0.8 8.7Z" fill="#fff" stroke="#111" stroke-width="0.6"/><path d="M0.8 11.200000000000001 L11.5 11.200000000000001 L16.2 13.5 L5 13.5Z" fill="#0a5a32"/><rect x="5" y="13.5" width="11.2" height="2.7" fill="#22b070" stroke="#111" stroke-width="0.6"/><path d="M0.8 11.200000000000001 L5 13.5 L5 16.2 L0.8 13.9Z" fill="#fff" stroke="#111" stroke-width="0.6"/><path d="M3.5 1.2 L6.5 1.2 L8 2.3 L5 2.3Z" fill="#f0e060"/></svg><span class="t">Add to "WoTLauncher.rar"</span></div>
<div class="mi" style="top:341px"><svg class="mic" style="top:3px;left:10px" width="17" height="17" viewBox="0 0 17 17"><path d="M0.8 0.8 L11.5 0.8 L16.2 3.1 L5 3.1Z" fill="#7a0c44"/><rect x="5" y="3.1" width="11.2" height="2.7" fill="#d42a88" stroke="#111" stroke-width="0.6"/><path d="M0.8 0.8 L5 3.1 L5 5.8 L0.8 3.5Z" fill="#fff" stroke="#111" stroke-width="0.6"/><path d="M0.8 6.0 L11.5 6.0 L16.2 8.3 L5 8.3Z" fill="#0e3a7a"/><rect x="5" y="8.3" width="11.2" height="2.7" fill="#2f8ee0" stroke="#111" stroke-width="0.6"/><path d="M0.8 6.0 L5 8.3 L5 11.0 L0.8 8.7Z" fill="#fff" stroke="#111" stroke-width="0.6"/><path d="M0.8 11.200000000000001 L11.5 11.200000000000001 L16.2 13.5 L5 13.5Z" fill="#0a5a32"/><rect x="5" y="13.5" width="11.2" height="2.7" fill="#22b070" stroke="#111" stroke-width="0.6"/><path d="M0.8 11.200000000000001 L5 13.5 L5 16.2 L0.8 13.9Z" fill="#fff" stroke="#111" stroke-width="0.6"/><path d="M3.5 1.2 L6.5 1.2 L8 2.3 L5 2.3Z" fill="#f0e060"/></svg><span class="t">Compress and email...</span></div>
<div class="mi" style="top:363px"><svg class="mic" style="top:3px;left:10px" width="17" height="17" viewBox="0 0 17 17"><path d="M0.8 0.8 L11.5 0.8 L16.2 3.1 L5 3.1Z" fill="#7a0c44"/><rect x="5" y="3.1" width="11.2" height="2.7" fill="#d42a88" stroke="#111" stroke-width="0.6"/><path d="M0.8 0.8 L5 3.1 L5 5.8 L0.8 3.5Z" fill="#fff" stroke="#111" stroke-width="0.6"/><path d="M0.8 6.0 L11.5 6.0 L16.2 8.3 L5 8.3Z" fill="#0e3a7a"/><rect x="5" y="8.3" width="11.2" height="2.7" fill="#2f8ee0" stroke="#111" stroke-width="0.6"/><path d="M0.8 6.0 L5 8.3 L5 11.0 L0.8 8.7Z" fill="#fff" stroke="#111" stroke-width="0.6"/><path d="M0.8 11.200000000000001 L11.5 11.200000000000001 L16.2 13.5 L5 13.5Z" fill="#0a5a32"/><rect x="5" y="13.5" width="11.2" height="2.7" fill="#22b070" stroke="#111" stroke-width="0.6"/><path d="M0.8 11.200000000000001 L5 13.5 L5 16.2 L0.8 13.9Z" fill="#fff" stroke="#111" stroke-width="0.6"/><path d="M3.5 1.2 L6.5 1.2 L8 2.3 L5 2.3Z" fill="#f0e060"/></svg><span class="t">Compress to "WoTLauncher.rar" and email</span></div>
<div class="mi" style="top:385px"><span class="t">Pripnúť na panel úloh</span></div>
<div class="mi" style="top:407px"><svg class="mic" style="top:4px;left:11px" width="14" height="14" viewBox="0 0 14 14"><circle cx="6.5" cy="6.5" r="6.2" fill="#e6c320" stroke="#b89510" stroke-width="0.8"/><ellipse cx="6.5" cy="4.5" rx="4.5" ry="2.5" fill="#f8e88a" opacity=".7"/><circle cx="6.5" cy="6.5" r="1.8" fill="#fff" stroke="#c9a818" stroke-width="0.7"/></svg><span class="t">PowerISO</span><svg class="ar" width="8" height="12" viewBox="0 0 8 12"><path d="M0.6 0.6 L6.6 6 L0.6 11.4" fill="none" stroke="#1a1024" stroke-width="1.2"/></svg></div>
<div class="sep" style="top:432px"></div>
<div class="mi" style="top:436px"><svg class="mic" style="top:4px;left:11px" width="14" height="14" viewBox="0 0 14 14"><circle cx="6.5" cy="6.5" r="6" fill="#ecebff" stroke="#8f8fc0" stroke-width="1"/><circle cx="6.5" cy="6.5" r="1.3" fill="#552266"/></svg><span class="t">MagicISO</span><svg class="ar" width="8" height="12" viewBox="0 0 8 12"><path d="M0.6 0.6 L6.6 6 L0.6 11.4" fill="none" stroke="#1a1024" stroke-width="1.2"/></svg></div>
<div class="sep" style="top:461px"></div>
<div class="mi" style="top:465px"><span class="t">Obnoviť predchádzajúce verzie</span></div>
<div class="sep" style="top:490px"></div>
<div class="mi" style="top:494px"><span class="t">Odoslať kam</span><svg class="ar" width="8" height="12" viewBox="0 0 8 12"><path d="M0.6 0.6 L6.6 6 L0.6 11.4" fill="none" stroke="#1a1024" stroke-width="1.2"/></svg></div>
<div class="sep" style="top:519px"></div>
<div class="mi" style="top:523px"><span class="t">Vystrihnúť</span></div>
<div class="mi" style="top:545px"><span class="t">Kopírovať</span></div>
<div class="sep" style="top:570px"></div>
<div class="mi" style="top:574px"><span class="t">Vytvoriť odkaz</span></div>
<div class="mi" style="top:596px"><span class="t">Odstrániť</span></div>
<div class="mi" style="top:618px"><span class="t">Premenovať</span></div>
<div class="sep" style="top:643px"></div>
<div class="mi" style="top:647px"><span class="t">Vlastnosti</span></div>
</div>
<div id="sub">
<div class="mi hl" style="top:2px;left:2px;width:311px"><span class="t" style="left:32px">Vysokovýkonný procesor NVIDIA</span></div>
<div class="mi" style="top:24px"><span class="t">Integrovaná grafika (predvolené)</span></div>
<div class="sep" style="top:49px;left:34px;width:279px"></div>
<div class="mi" style="top:53px"><span class="t">Zmeniť predvolený grafický procesor...</span></div>
</div>

</body></html>
